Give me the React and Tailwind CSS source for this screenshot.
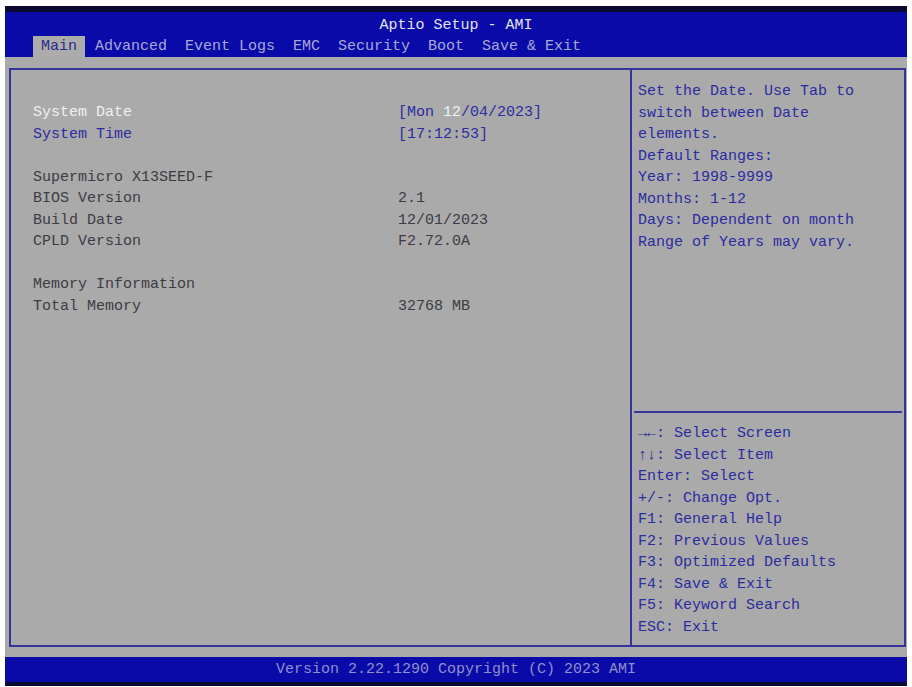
import React from 'react';

const tabs = ['Main', 'Advanced', 'Event Logs', 'EMC', 'Security', 'Boot', 'Save & Exit'];

const infoRows = [
  ['Supermicro X13SEED-F', ''],
  ['BIOS Version', '2.1'],
  ['Build Date', '12/01/2023'],
  ['CPLD Version', 'F2.72.0A'],
];

const helpText = [
  'Set the Date. Use Tab to',
  'switch between Date',
  'elements.',
  'Default Ranges:',
  'Year: 1998-9999',
  'Months: 1-12',
  'Days: Dependent on month',
  'Range of Years may vary.',
];

const keys = [
  '\u2192\u2190: Select Screen',
  '\u2191\u2193: Select Item',
  'Enter: Select',
  '+/-: Change Opt.',
  'F1: General Help',
  'F2: Previous Values',
  'F3: Optimized Defaults',
  'F4: Save & Exit',
  'F5: Keyword Search',
  'ESC: Exit',
];

const Row = ({ label, value, labelClass = 'text-[#3c3c44]', valueClass = 'text-[#3c3c44]' }) => (
  <div className="flex h-[21.5px] items-center">
    <span className={`w-[365px] whitespace-pre ${labelClass}`}>{label}</span>
    <span className={`whitespace-pre ${valueClass}`}>{value}</span>
  </div>
);

const App = () => {
  return (
    <div
      className="w-[912px] h-[687px] bg-white pt-[6px] pb-[1px] pl-[5px] pr-[5px] overflow-hidden"
      style={{ fontFamily: '"Liberation Mono", "DejaVu Sans Mono", monospace' }}
    >
      <div className="flex flex-col h-full text-[15px] leading-none">
        {/* header */}
        <div className="h-[51px] bg-[#0a0aa8] border-t-[6px] border-[#0a0a30] flex flex-col">
          <div className="h-[24px] pt-[3px] flex items-center justify-center text-[#e4e4f0]">
            Aptio Setup - AMI
          </div>
          <div className="flex items-end h-[21px] pl-[28px]">
            {tabs.map((t, i) => (
              <div
                key={t}
                className={`h-[21px] flex items-center px-[8px] mr-[2px] whitespace-pre ${
                  i === 0 ? 'bg-[#acacac] text-[#2a2a8c]' : 'text-[#a8a8d8]'
                }`}
              >
                {t}
              </div>
            ))}
          </div>
        </div>

        {/* body */}
        <div className="flex-1 bg-[#aaaaaa] pt-[11px] pb-[10px] pl-[4px] pr-[1px]">
          <div className="flex h-full border-2 border-[#34349a]">
            <div className="w-[621px] border-r-2 border-[#34349a] pt-[32px] pl-[22px]">
              <Row
                label="System Date"
                labelClass="text-[#f0f0f0]"
                valueClass="text-[#2c2ca0]"
                value={
                  <>
                    [Mon <span className="text-[#f0f0f0]">12</span>/04/2023]
                  </>
                }
              />
              <Row label="System Time" value="[17:12:53]" labelClass="text-[#2c2ca0]" valueClass="text-[#2c2ca0]" />
              <div className="h-[21.5px]" />
              {infoRows.map(([l, v]) => (
                <Row key={l} label={l} value={v} />
              ))}
              <div className="h-[21.5px]" />
              <Row label="Memory Information" value="" />
              <Row label="Total Memory" value="32768 MB" />
            </div>

            <div className="flex-1 flex flex-col text-[#2c2ca0]">
              <div className="flex-1 pt-[11px] pl-[6px]">
                {helpText.map((l) => (
                  <div key={l} className="h-[21.5px] flex items-center whitespace-pre">
                    {l}
                  </div>
                ))}
              </div>
              <div className="mx-[2px] border-t-2 border-[#34349a]" />
              <div className="h-[232px] pt-[10px] pl-[6px]">
                {keys.map((l) => (
                  <div key={l} className="h-[21.5px] flex items-center whitespace-pre">
                    {l}
                  </div>
                ))}
              </div>
            </div>
          </div>
        </div>

        {/* footer */}
        <div className="h-[29px] bg-[#0a0aa8] border-b-[4px] border-[#0a0a30] flex items-center justify-center text-[#9090cc]">
          Version 2.22.1290 Copyright (C) 2023 AMI
        </div>
      </div>
    </div>
  );
};

export default App;
